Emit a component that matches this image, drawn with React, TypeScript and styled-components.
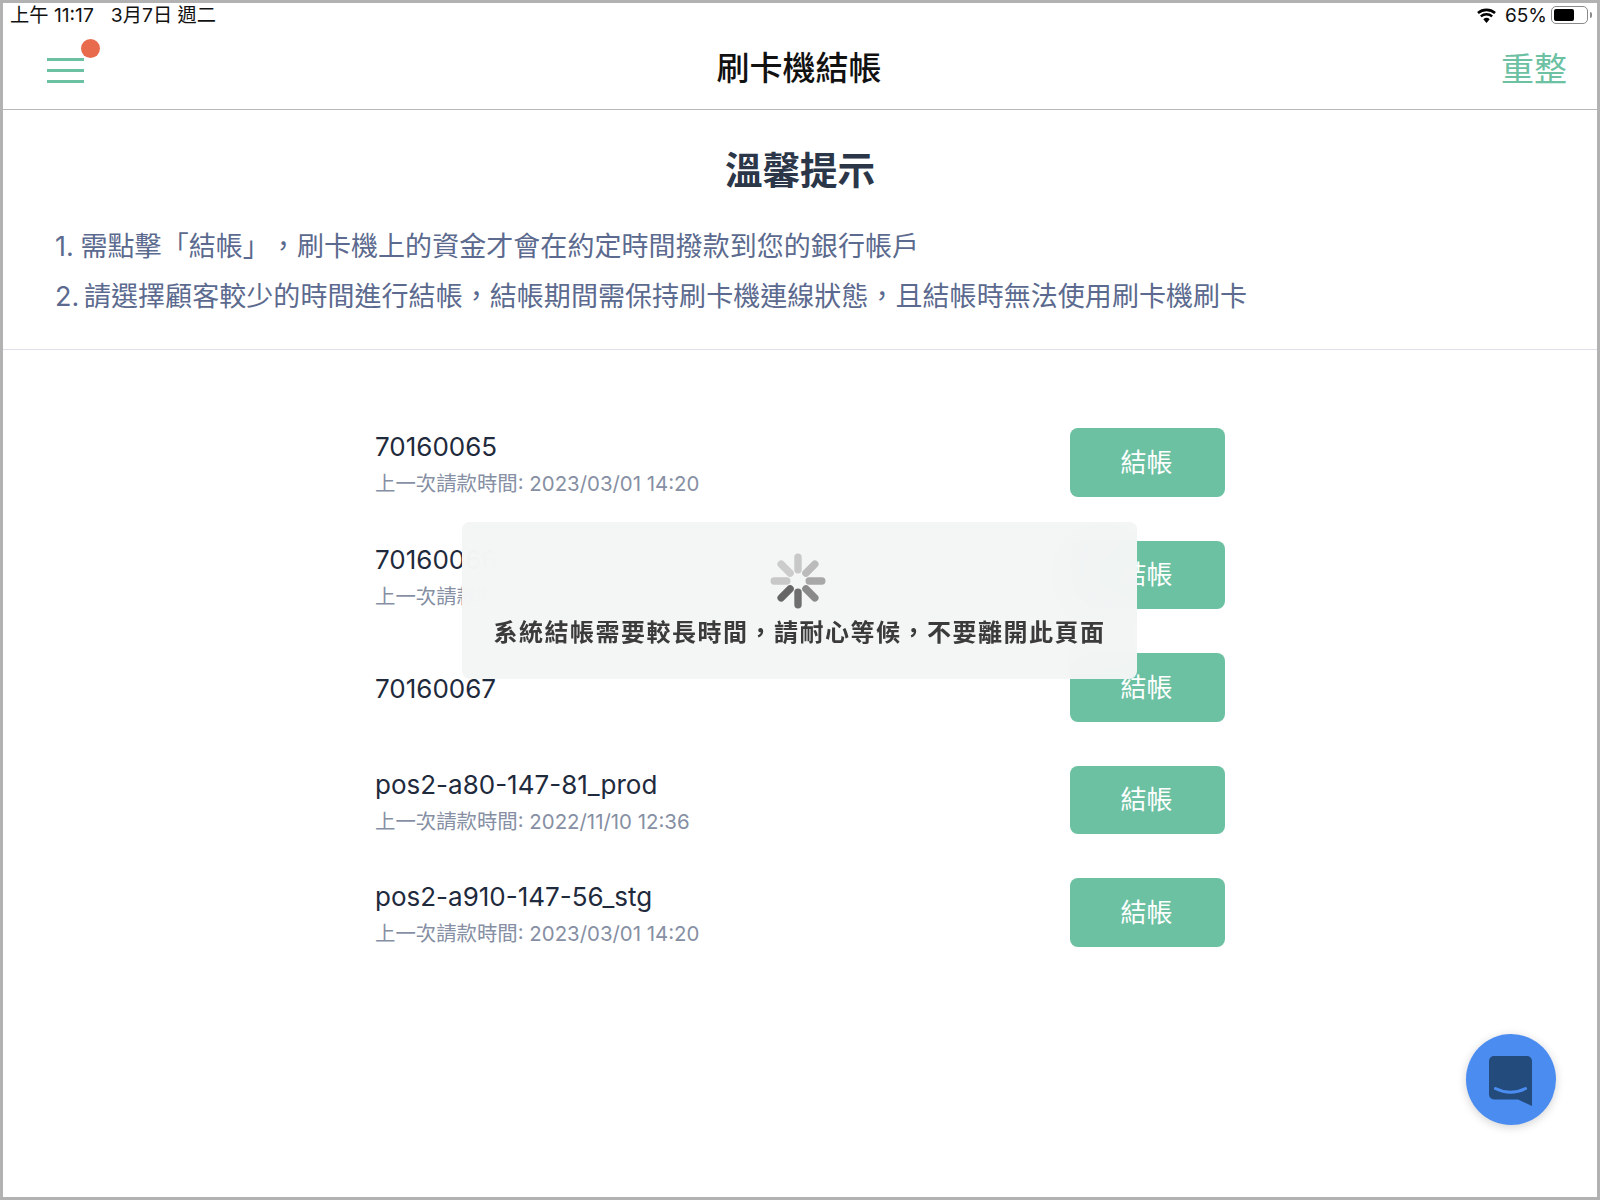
import React from "react";
import styled, { createGlobalStyle } from "styled-components";

const FONT = `Inter, "Noto Sans CJK TC", "Noto Sans", sans-serif`;
const GREEN = "#6cc1a2";

const Global = createGlobalStyle`
  html, body { margin: 0; padding: 0; background: #fff; }
  * { box-sizing: border-box; }
  body { font-family: ${FONT}; text-spacing-trim: space-all; }
`;

const Frame = styled.div`
  position: relative;
  width: 1600px;
  height: 1200px;
  border: 3px solid #b2b2b2;
  background: #fff;
  overflow: hidden;
`;

const StatusBar = styled.div`
  display: flex;
  align-items: center;
  justify-content: space-between;
  height: 25px;
  padding: 0 5px 4px 7px;
  font-size: 19.25px;
  color: #111;
`;

const StatusTime = styled.div`
  display: flex;
  gap: 17px;
  white-space: nowrap;
`;

const StatusRight = styled.div`
  display: flex;
  align-items: center;
  gap: 7px;
  padding-top: 3px;
  font-size: 19px;
`;

const WifiIcon = styled.svg`
  margin-right: 1px;
`;

const Battery = styled.div`
  position: relative;
  width: 37px;
  height: 18px;
  margin: 0 4px 0 -3px;
  border: 1px solid #8a8a8a;
  border-radius: 5px;
  padding: 2px;
  &::after {
    content: "";
    position: absolute;
    right: -5px;
    top: 5px;
    width: 2px;
    height: 6px;
    border-radius: 0 2px 2px 0;
    background: #8a8a8a;
  }
`;

const BatteryFill = styled.div`
  height: 100%;
  border-radius: 2px;
  background: #000;
`;

const Header = styled.header`
  display: grid;
  grid-template-columns: 1fr auto 1fr;
  align-items: center;
  height: 82px;
  padding: 0 30px;
  border-bottom: 1px solid #b9b9b9;
`;

const MenuButton = styled.div`
  position: relative;
  display: flex;
  flex-direction: column;
  gap: 8px;
  width: 37px;
  margin: 3px 0 0 14px;
  justify-self: start;
`;

const MenuLine = styled.span`
  display: block;
  height: 3px;
  background: ${GREEN};
`;

const Badge = styled.span`
  position: absolute;
  top: -19px;
  left: 34px;
  width: 19px;
  height: 19px;
  border-radius: 50%;
  background: #e96b4e;
`;

const Title = styled.h1`
  margin: 0 2px 0 0;
  font-size: 33px;
  font-weight: 500;
  color: #111;
  line-height: 1;
`;

const Refresh = styled.div`
  justify-self: end;
  margin-bottom: 4px;
  font-size: 33px;
  font-weight: 400;
  color: ${GREEN};
`;

const Tips = styled.section`
  height: 240px;
  padding-top: 36px;
  border-bottom: 1px solid #dde0e8;
`;

const TipsTitle = styled.h2`
  margin: 0 0 26px;
  text-align: center;
  font-size: 37.5px;
  line-height: 50px;
  font-weight: 700;
  color: #2b3648;
`;

const TipLine = styled.p<{ $wordGap: number }>`
  margin: 0;
  padding-left: 52px;
  font-size: 27px;
  line-height: 50px;
  font-weight: 400;
  letter-spacing: 0.05px;
  word-spacing: ${(p) => p.$wordGap}px;
  color: #5b6a8e;
  white-space: nowrap;
`;

const List = styled.div`
  width: 850px;
  margin: 78px auto 0;
  display: flex;
  flex-direction: column;
  gap: 44px;
`;

const Row = styled.div`
  display: flex;
  align-items: center;
  justify-content: space-between;
  height: 68.5px;
`;

const DeviceInfo = styled.div`
  display: flex;
  flex-direction: column;
  gap: 4px;
  padding-top: 4px;
`;

const DeviceName = styled.div`
  font-size: 26px;
  line-height: 36px;
  color: #1f2a3d;
  font-weight: 400;
`;

const DeviceTime = styled.div`
  font-size: 20.4px;
  line-height: 30px;
  font-weight: 400;
  color: #868fa3;
`;

const CloseButton = styled.button`
  width: 155px;
  height: 68.5px;
  padding: 0 2px 4px 0;
  border: 0;
  border-radius: 8px;
  background: ${GREEN};
  color: #fff;
  font-family: ${FONT};
  font-size: 26px;
  font-weight: 400;
`;

const Toast = styled.div`
  position: absolute;
  left: 459px;
  top: 519px;
  width: 675px;
  height: 157px;
  border-radius: 8px;
  background: rgba(244, 245, 245, 0.97);
  backdrop-filter: blur(24px);
  display: flex;
  flex-direction: column;
  align-items: center;
  padding-top: 31px;
`;

const SpinnerIcon = styled.svg`
  margin-right: 3px;
`;

const ToastText = styled.div`
  margin-top: 6px;
  font-size: 24px;
  line-height: 36px;
  font-weight: 600;
  letter-spacing: 1.5px;
  color: #3b3b3b;
  white-space: nowrap;
`;

const Fab = styled.div`
  position: absolute;
  left: 1463px;
  top: 1031px;
  width: 90px;
  height: 91px;
  border-radius: 50%;
  background: #4b8cf0;
  box-shadow: 0 2px 10px rgba(0, 0, 0, 0.18);
  display: flex;
  align-items: center;
  justify-content: center;
`;

const ChatSvg = styled.svg`
  margin: 2px 2px 0 0;
`;

const spokes = [
  { a: 0, c: "#c8c8c8" },
  { a: 45, c: "#bbbbbb" },
  { a: 90, c: "#a8a8a8" },
  { a: 135, c: "#8a8a8a" },
  { a: 180, c: "#6f6f6f" },
  { a: 225, c: "#666666" },
  { a: 270, c: "#c8c8c8" },
  { a: 315, c: "#cccccc" },
];

const Spinner = () => (
  <SpinnerIcon width="56" height="56" viewBox="0 0 56 56">
    {spokes.map((s) => (
      <rect key={s.a} x="24.3" y="0.5" width="7.4" height="20" rx="3.7" fill={s.c} transform={`rotate(${s.a} 28 28)`} />
    ))}
  </SpinnerIcon>
);

const Wifi = () => (
  <WifiIcon width="21" height="15" viewBox="0 0 22 16">
    <path d="M11 16l-3.400-4a5 5 0 0 1 6.800 0z" fill="#000" />
    <path d="M5.800 9.900a8 8 0 0 1 10.400 0l1.700-2a10.700 10.700 0 0 0-13.800 0z" fill="#000" />
    <path d="M2.800 6.400a12.500 12.500 0 0 1 16.400 0l1.800-2.100a15.300 15.300 0 0 0-20 0z" fill="#000" />
  </WifiIcon>
);

const ChatIcon = () => (
  <ChatSvg width="43" height="50" viewBox="0 0 43 50">
    <path d="M5 0h33a5 5 0 0 1 5 5v45l-14-6.500H5a5 5 0 0 1-5-5V5a5 5 0 0 1 5-5z" fill="#234b7c" />
    <path d="M6.500 32.500Q21.500 40 36.500 32.500" fill="none" stroke="#4b8cf0" strokeWidth="3" strokeLinecap="round" />
  </ChatSvg>
);

const rows = [
  { name: "70160065", time: "上一次請款時間: 2023/03/01 14:20" },
  { name: "70160066", time: "上一次請款時間: 2023/03/01 14:20" },
  { name: "70160067" },
  { name: "pos2-a80-147-81_prod", time: "上一次請款時間: 2022/11/10 12:36" },
  { name: "pos2-a910-147-56_stg", time: "上一次請款時間: 2023/03/01 14:20" },
];

export default function App() {
  return (
    <Frame>
      <Global />
      <StatusBar>
        <StatusTime>
          <span>上午 11:17</span>
          <span>3月7日 週二</span>
        </StatusTime>
        <StatusRight>
          <Wifi />
          <span>65%</span>
          <Battery>
            <BatteryFill style={{ width: "65%" }} />
          </Battery>
        </StatusRight>
      </StatusBar>
      <Header>
        <MenuButton>
          <MenuLine />
          <MenuLine />
          <MenuLine />
          <Badge />
        </MenuButton>
        <Title>刷卡機結帳</Title>
        <Refresh>重整</Refresh>
      </Header>
      <Tips>
        <TipsTitle>溫馨提示</TipsTitle>
        <TipLine $wordGap={-1}>1. 需點擊「結帳」，刷卡機上的資金才會在約定時間撥款到您的銀行帳戶</TipLine>
        <TipLine $wordGap={-3}>2. 請選擇顧客較少的時間進行結帳，結帳期間需保持刷卡機連線狀態，且結帳時無法使用刷卡機刷卡</TipLine>
      </Tips>
      <List>
        {rows.map((r) => (
          <Row key={r.name}>
            <DeviceInfo>
              <DeviceName>{r.name}</DeviceName>
              {r.time && <DeviceTime>{r.time}</DeviceTime>}
            </DeviceInfo>
            <CloseButton>結帳</CloseButton>
          </Row>
        ))}
      </List>
      <Toast>
        <Spinner />
        <ToastText>系統結帳需要較長時間，請耐心等候，不要離開此頁面</ToastText>
      </Toast>
      <Fab>
        <ChatIcon />
      </Fab>
    </Frame>
  );
}
